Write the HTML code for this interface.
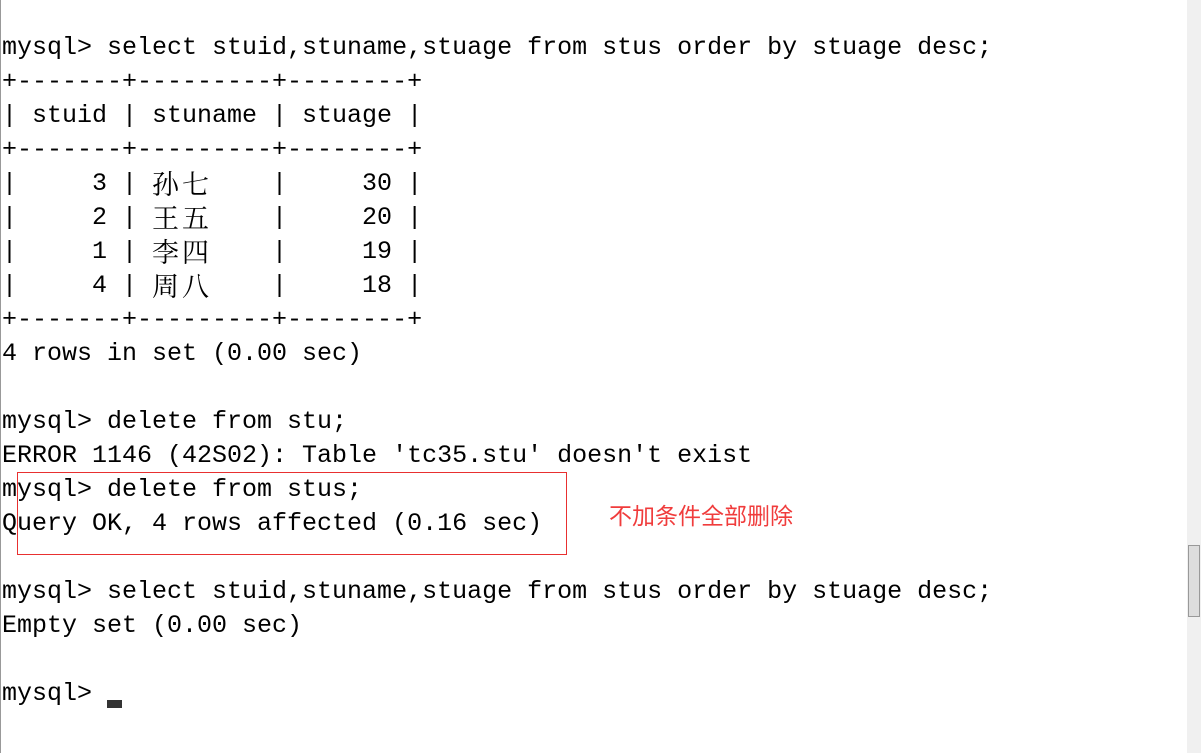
<!DOCTYPE html>
<html><head><meta charset="utf-8"><style>
html,body{margin:0;padding:0;background:#fff;width:1201px;height:753px;overflow:hidden;position:relative}
.t{position:absolute;left:2px;top:31px;font-family:"Liberation Mono","Noto Sans CJK SC",monospace;font-size:25px;color:#000}
.t div{height:34px;line-height:34px;white-space:pre;overflow:visible}
.c{display:inline-block;width:30px;height:34px;line-height:32px;vertical-align:top;font-family:"Noto Serif CJK SC","Noto Sans CJK SC",serif;font-size:27px}
.box{position:absolute;left:17px;top:472px;width:548px;height:81px;border:1px solid #e83030}
.note{position:absolute;left:609px;top:499px;font-family:"Noto Sans CJK SC",sans-serif;font-size:23px;color:#f03c3c;line-height:30px}
.cur{position:absolute;left:107px;top:700px;width:15px;height:8px;background:#333}
.lb{position:absolute;left:0;top:0;width:1px;height:753px;background:#999}
.sb{position:absolute;left:1187px;top:0;width:14px;height:753px;background:#f0f0f0}
.th{position:absolute;left:1188px;top:545px;width:12px;height:72px;background:#ddd;border:1px solid #999;box-sizing:border-box}
</style></head><body>
<div class="lb"></div>
<div class="t">
<div>mysql&gt; select stuid,stuname,stuage from stus order by stuage desc;</div>
<div>+-------+---------+--------+</div>
<div>| stuid | stuname | stuage |</div>
<div>+-------+---------+--------+</div>
<div>|     3 | <span class="c">孙</span><span class="c">七</span>    |     30 |</div>
<div>|     2 | <span class="c">王</span><span class="c">五</span>    |     20 |</div>
<div>|     1 | <span class="c">李</span><span class="c">四</span>    |     19 |</div>
<div>|     4 | <span class="c">周</span><span class="c">八</span>    |     18 |</div>
<div>+-------+---------+--------+</div>
<div>4 rows in set (0.00 sec)</div>
<div> </div>
<div>mysql&gt; delete from stu;</div>
<div>ERROR 1146 (42S02): Table 'tc35.stu' doesn't exist</div>
<div>mysql&gt; delete from stus;</div>
<div>Query OK, 4 rows affected (0.16 sec)</div>
<div> </div>
<div>mysql&gt; select stuid,stuname,stuage from stus order by stuage desc;</div>
<div>Empty set (0.00 sec)</div>
<div> </div>
<div>mysql&gt; </div>
</div>
<div class="box"></div>
<div class="note">不加条件全部删除</div>
<div class="cur"></div>
<div class="sb"></div><div class="th"></div>
</body></html>
